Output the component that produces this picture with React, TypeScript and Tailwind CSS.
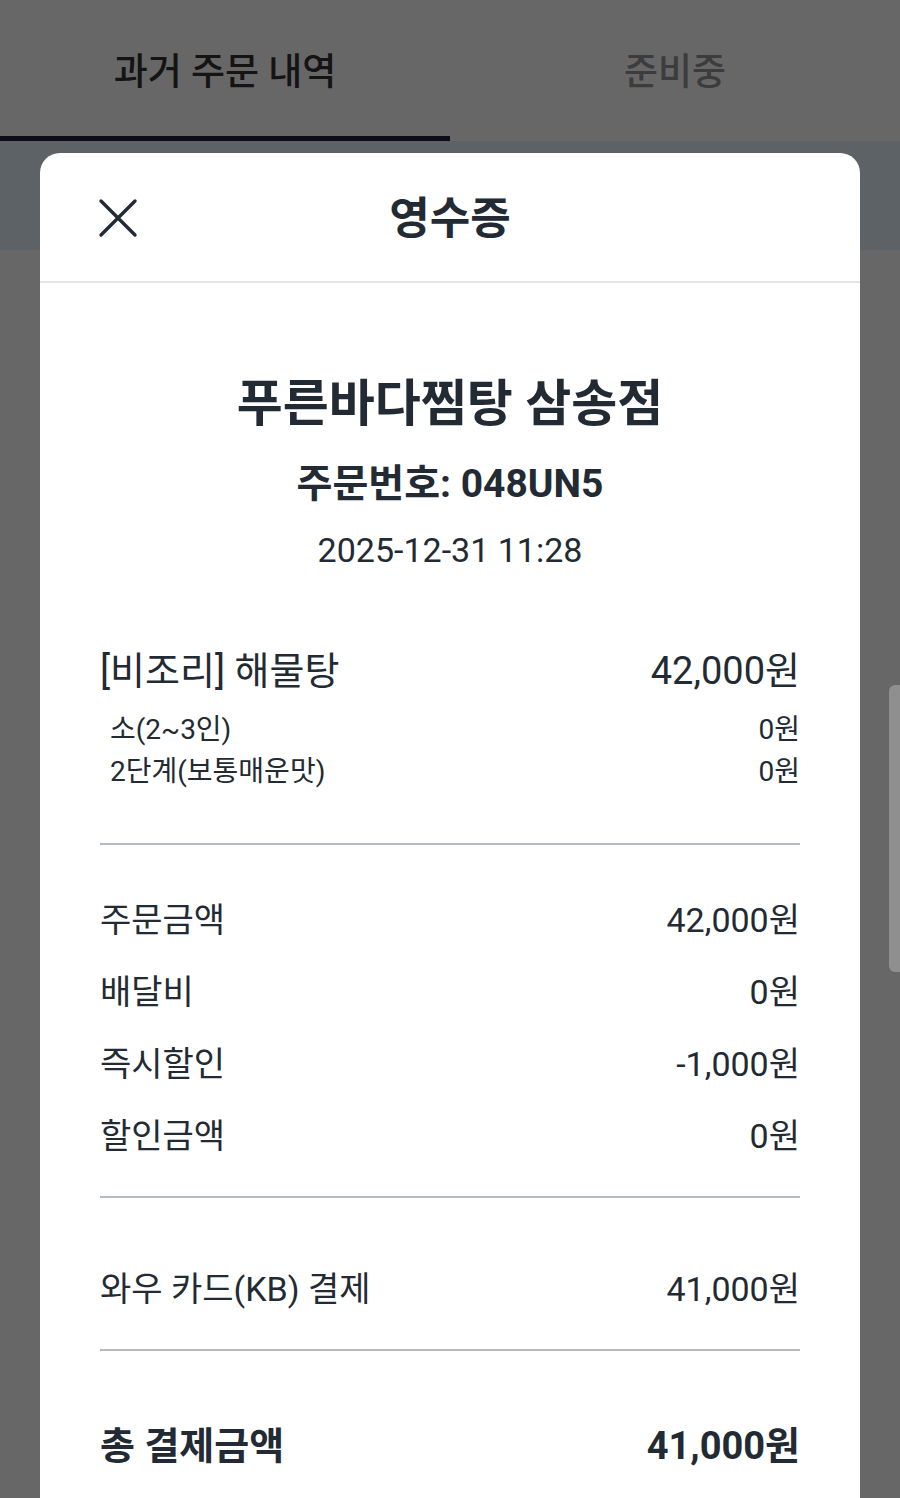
const font = { fontFamily: 'Roboto, "Noto Sans CJK KR", "Noto Sans", sans-serif' }

function Row({ label, value, bold }: { label: string; value: string; bold?: boolean }) {
  return (
    <div className={`flex items-center justify-between ${bold ? "h-[48px] text-[38px] font-bold" : "h-[72px] text-[34px]"}`}>
      <span>{label}</span>
      <span>{value}</span>
    </div>
  )
}

function Divider({ className = "" }: { className?: string }) {
  return <div className={`h-[2px] bg-[#b5bbbf] ${className}`} />
}

export default function App() {
  return (
    <div className="relative h-[1498px] w-[900px] overflow-hidden bg-[#676767]" style={font}>
      <div className="flex h-[141px]">
        <div className="flex flex-1 items-center justify-center border-b-[5px] border-[#0b0b1a] pt-[10px] text-[37px] font-medium text-[#141414]">
          과거 주문 내역
        </div>
        <div className="flex flex-1 items-center justify-center pt-[5px] text-[37px] font-medium text-[#3c3c3c]">
          준비중
        </div>
      </div>
      <div className="h-[109px] bg-[#5c6266]" />

      <div className="absolute left-[40px] top-[153px] w-[820px] rounded-t-[20px] bg-white text-[#222a33]">
        <div className="relative flex h-[130px] items-center justify-center border-b-2 border-[#e3e5e6] pt-[4px]">
          <svg className="absolute left-[58px] top-[45px]" width="40" height="40" viewBox="0 0 40 40" fill="none">
            <path d="M3 3 L37 37 M37 3 L3 37" stroke="#222a33" strokeWidth="3.4" strokeLinecap="round" />
          </svg>
          <span className="text-[44px] font-bold">영수증</span>
        </div>

        <div className="px-[60px]">
          <div className="pt-[91px] text-center text-[50px] font-bold leading-[60px]">푸른바다찜탕 삼송점</div>
          <div className="mt-[26px] text-center text-[39px] font-bold leading-[48px]">주문번호: 048UN5</div>
          <div className="mt-[20px] text-center text-[34px] leading-[44px]">2025-12-31 11:28</div>

          <div className="mt-[75px] flex items-center justify-between text-[38px] leading-[48px]">
            <span>[비조리] 해물탕</span>
            <span>42,000원</span>
          </div>
          <div className="mt-[14px] text-[28px] leading-[42px]">
            <div className="flex justify-between pl-[10px]">
              <span>소(2~3인)</span>
              <span>0원</span>
            </div>
            <div className="flex justify-between pl-[10px]">
              <span>2단계(보통매운맛)</span>
              <span>0원</span>
            </div>
          </div>

          <Divider className="mt-[50px]" />
          <div className="mt-[39px]">
            <Row label="주문금액" value="42,000원" />
            <Row label="배달비" value="0원" />
            <Row label="즉시할인" value="-1,000원" />
            <Row label="할인금액" value="0원" />
          </div>
          <Divider className="mt-[24px]" />
          <div className="mt-[55px]">
            <Row label="와우 카드(KB) 결제" value="41,000원" />
          </div>
          <Divider className="mt-[24px]" />
          <div className="mt-[71px] pb-[80px]">
            <Row label="총 결제금액" value="41,000원" bold />
          </div>
        </div>
      </div>

      <div className="absolute right-0 top-[685px] h-[287px] w-[11px] rounded-l-[6px] bg-[#8f8f8f]" />
    </div>
  )
}
